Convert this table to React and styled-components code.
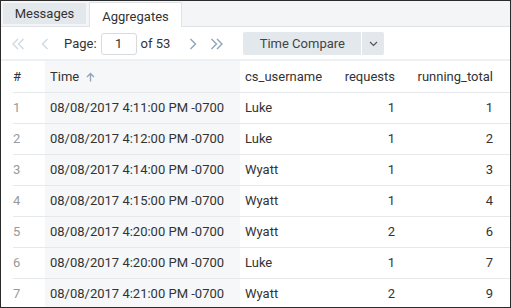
import styled, { createGlobalStyle } from 'styled-components'

const GlobalStyle = createGlobalStyle`
  body {
    margin: 0;
    font-family: Roboto, "Liberation Sans", sans-serif;
    color: #333;
  }
`

const Frame = styled.div`
  width: 511px;
  height: 308px;
  box-sizing: border-box;
  border: 1px solid #2b2b2b;
  overflow: hidden;
  background: #fff;
`

//--------- TABS ---------
const TabBar = styled.div`
  display: flex;
  align-items: flex-end;
  gap: 3px;
  height: 26px;
  padding-left: 2px;
  background: #f3f5f7;
  border-bottom: 1px solid #dfe3e7;
  box-sizing: border-box;
`

const Tab = styled.div`
  width: ${({ w }) => w}px;
  height: ${({ active }) => (active ? '25px' : '21px')};
  margin-bottom: ${({ active }) => (active ? '-1px' : '2px')};
  padding-top: ${({ active }) => (active ? '2px' : '0')};
  display: flex;
  align-items: center;
  justify-content: center;
  font-size: 13px;
  color: #333;
  box-sizing: border-box;
  background: ${({ active }) => (active ? '#fff' : '#e3e8ec')};
  border: ${({ active }) => (active ? '1px solid #dfe3e7' : 'none')};
  border-bottom: none;
`

//--------- TOOLBAR ---------
const Toolbar = styled.div`
  display: flex;
  align-items: center;
  height: 34px;
  padding-left: 9px;
  padding-top: 1px;
  border-bottom: 2px solid #eef1f3;
  box-sizing: border-box;
`

const PagerBtn = styled.button`
  border: none;
  background: none;
  padding: 0;
  width: ${({ w }) => w}px;
  height: 20px;
  display: flex;
  align-items: center;
  justify-content: center;
  color: ${({ disabled }) => (disabled ? '#d0d9e1' : '#8ea3b6')};
  margin: 0 ${({ mr }) => mr || 0}px 0 ${({ ml }) => ml || 0}px;
`

const Label = styled.span`
  font-size: 13px;
  color: #333;
`

const PageInput = styled.div`
  width: 36px;
  height: 22px;
  box-sizing: border-box;
  border: 1px solid #d6dbe0;
  border-radius: 3px;
  margin: 0 4px;
  display: flex;
  align-items: center;
  justify-content: center;
  font-size: 13px;
`

const SplitButton = styled.div`
  display: flex;
  gap: 1px;
  height: 23px;
  margin-left: 18px;
`

const ButtonPart = styled.div`
  background: #e3e8ec;
  display: flex;
  align-items: center;
  justify-content: center;
  width: ${({ w }) => w}px;
  font-size: 13px;
  color: #444;
  border-radius: ${({ first }) => (first ? '2px 0 0 2px' : '0 2px 2px 0')};
`

//--------- TABLE ---------
const Table = styled.table`
  border-collapse: collapse;
  table-layout: fixed;
  margin-left: 12px;
  width: 497px;
  font-size: 13px;
`

const Col = styled.col`
  width: ${({ w }) => w}px;
`

const Row = styled.tr`
  height: 31px;
`

const Th = styled.th`
  padding: 0 ${({ pr }) => pr || 0}px 0 ${({ pl }) => pl || 0}px;
  text-align: ${({ right }) => (right ? 'right' : 'left')};
  font-weight: 400;
  color: #333;
  background: ${({ shaded }) => (shaded ? '#f5f7f9' : 'transparent')};
  border-bottom: 1px solid #e6e9ec;
  white-space: nowrap;
`

const Td = styled.td`
  padding: 0 ${({ pr }) => pr || 0}px 0 ${({ pl }) => pl || 0}px;
  text-align: ${({ right }) => (right ? 'right' : 'left')};
  color: ${({ muted }) => (muted ? '#999' : '#333')};
  background: ${({ shaded }) => (shaded ? '#f5f7f9' : 'transparent')};
  border-bottom: 1px solid #e6e9ec;
  white-space: nowrap;
`

const SortArrow = styled.svg`
  margin-left: 7px;
  vertical-align: -1px;
`

const rows = [
  { time: '08/08/2017 4:11:00 PM -0700', user: 'Luke', requests: 1, total: 1 },
  { time: '08/08/2017 4:12:00 PM -0700', user: 'Luke', requests: 1, total: 2 },
  { time: '08/08/2017 4:14:00 PM -0700', user: 'Wyatt', requests: 1, total: 3 },
  { time: '08/08/2017 4:15:00 PM -0700', user: 'Wyatt', requests: 1, total: 4 },
  { time: '08/08/2017 4:20:00 PM -0700', user: 'Wyatt', requests: 2, total: 6 },
  { time: '08/08/2017 4:20:00 PM -0700', user: 'Luke', requests: 1, total: 7 },
  { time: '08/08/2017 4:21:00 PM -0700', user: 'Wyatt', requests: 2, total: 9 },
]

const Chevron = ({ dir, double }) => {
  const flip = dir === 'left' ? 'scale(-1,1) translate(-14,0)' : undefined
  return (
    <svg width="14" height="14" viewBox="0 0 14 14" fill="none" stroke="currentColor" strokeWidth="1.4">
      <g transform={flip}>
        {double ? (
          <>
            <path d="M1.5 2 L6.5 7 L1.5 12" />
            <path d="M7 2 L12 7 L7 12" />
          </>
        ) : (
          <path d="M4.5 2 L9.5 7 L4.5 12" />
        )}
      </g>
    </svg>
  )
}

export default function App() {
  return (
    <Frame>
      <GlobalStyle />
      <TabBar>
        <Tab w={83}>Messages</Tab>
        <Tab w={93} active>Aggregates</Tab>
      </TabBar>
      <Toolbar>
        <PagerBtn w={16} mr={12} disabled><Chevron dir="left" double /></PagerBtn>
        <PagerBtn w={14} mr={12} disabled><Chevron dir="left" /></PagerBtn>
        <Label>Page:</Label>
        <PageInput>1</PageInput>
        <Label>of 53</Label>
        <PagerBtn w={14} mr={9} ml={16}><Chevron dir="right" /></PagerBtn>
        <PagerBtn w={16}><Chevron dir="right" double /></PagerBtn>
        <SplitButton>
          <ButtonPart w={118} first>Time Compare</ButtonPart>
          <ButtonPart w={22}>
            <svg width="9" height="6" viewBox="0 0 9 6" fill="none" stroke="#555" strokeWidth="1.2">
              <path d="M1 1 L4.5 4.5 L8 1" />
            </svg>
          </ButtonPart>
        </SplitButton>
      </Toolbar>
      <Table>
        <colgroup>
          <Col w={32} />
          <Col w={195} />
          <Col w={85} />
          <Col w={78} />
          <Col w={107} />
        </colgroup>
        <thead>
          <Row>
            <Th>#</Th>
            <Th pl={5} shaded>
              Time
              <SortArrow width="9" height="10" viewBox="0 0 9 10" fill="none" stroke="#8ea3b6" strokeWidth="1.3">
                <path d="M4.5 9.5 V1.5 M1 5 L4.5 1.5 L8 5" />
              </SortArrow>
            </Th>
            <Th pl={5}>cs_username</Th>
            <Th right pr={8}>requests</Th>
            <Th right pr={17}>running_total</Th>
          </Row>
        </thead>
        <tbody>
          {rows.map((r, i) => (
            <Row key={i}>
              <Td muted>{i + 1}</Td>
              <Td pl={5} shaded>{r.time}</Td>
              <Td pl={5}>{r.user}</Td>
              <Td right pr={8}>{r.requests}</Td>
              <Td right pr={17}>{r.total}</Td>
            </Row>
          ))}
        </tbody>
      </Table>
    </Frame>
  )
}
